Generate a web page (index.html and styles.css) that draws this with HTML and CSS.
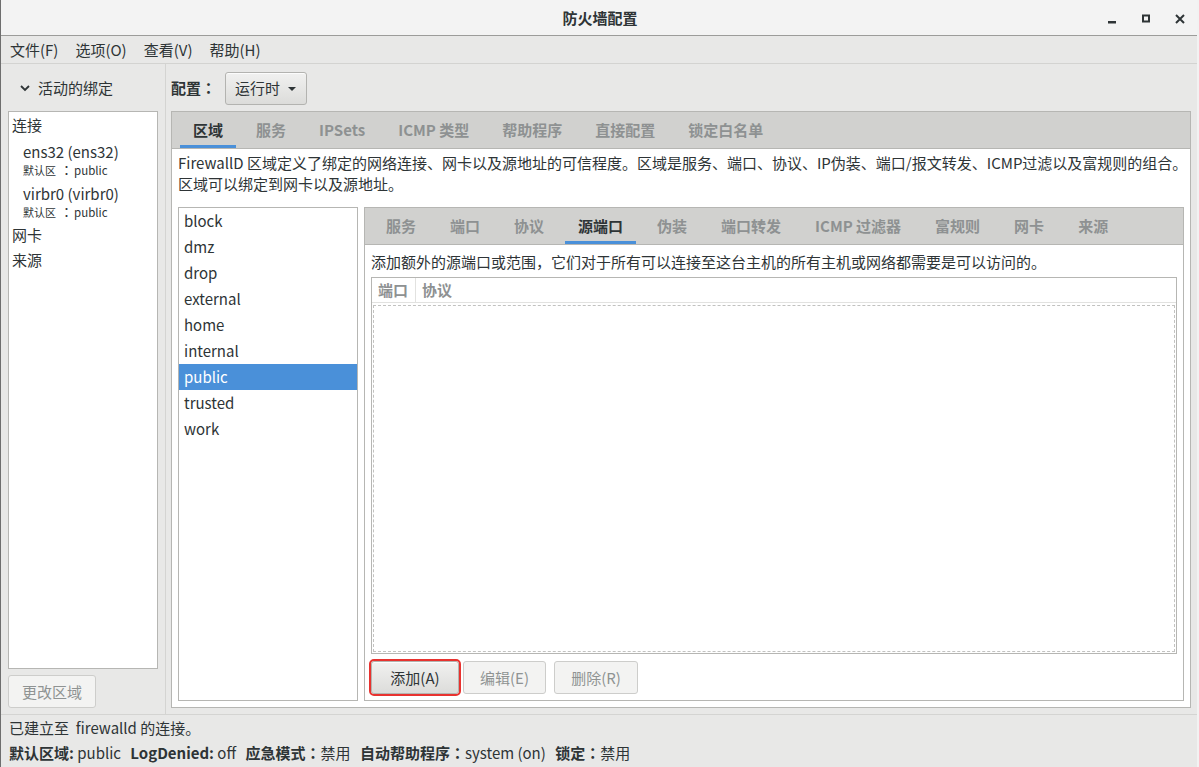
FILE: index.html
```html
<!DOCTYPE html>
<html lang="zh-CN">
<head>
<meta charset="utf-8">
<title>防火墙配置</title>
<link rel="stylesheet" href="styles.css">
</head>
<body>
<div class="window">
  <header class="titlebar">
    <div class="title">防火墙配置</div>
    <div class="controls">
      <svg class="ctl" viewBox="0 0 16 16" width="16" height="16"><rect x="4" y="10" width="8" height="2.5" fill="#2e3436"/></svg>
      <svg class="ctl" viewBox="0 0 16 16" width="16" height="16"><rect x="5" y="4.5" width="6" height="6" fill="none" stroke="#2e3436" stroke-width="2"/></svg>
      <svg class="ctl" viewBox="0 0 16 16" width="16" height="16"><path d="M4 4 L12 12 M12 4 L4 12" stroke="#2e3436" stroke-width="2" fill="none"/></svg>
    </div>
  </header>

  <nav class="menubar">
    <span>文件(F)</span>
    <span>选项(O)</span>
    <span>查看(V)</span>
    <span>帮助(H)</span>
  </nav>

  <div class="main">
    <aside class="left">
      <div class="expander">
        <svg class="chev" viewBox="0 0 10 10" width="10" height="10"><path d="M1 3 L5 7 L9 3" stroke="#2e3436" stroke-width="1.8" fill="none"/></svg>
        <span>活动的绑定</span>
      </div>
      <div class="bindings">
        <div class="cat">连接</div>
        <div class="bind">
          <div class="bname">ens32 (ens32)</div>
          <div class="bsub"><span class="sub-cjk">默认区</span><span class="colon sub-colon" lang="ja">：</span>public</div>
        </div>
        <div class="bind">
          <div class="bname">virbr0 (virbr0)</div>
          <div class="bsub"><span class="sub-cjk">默认区</span><span class="colon sub-colon" lang="ja">：</span>public</div>
        </div>
        <div class="cat cat-s">网卡</div>
        <div class="cat cat-s">来源</div>
      </div>
      <button class="btn btn-disabled change-zone">更改区域</button>
    </aside>

    <section class="right">
      <div class="config-row">
        <span class="cfg-label">配置<span class="colon" lang="ja">：</span></span>
        <button class="btn combo">运行时<svg class="caret" viewBox="0 0 8 4" width="8" height="4"><path d="M0 0 L8 0 L4 4 Z" fill="#2e3436"/></svg></button>
      </div>

      <div class="notebook outer">
        <div class="tabs">
          <span class="tab active">区域</span>
          <span class="tab">服务</span>
          <span class="tab">IPSets</span>
          <span class="tab">ICMP 类型</span>
          <span class="tab">帮助程序</span>
          <span class="tab">直接配置</span>
          <span class="tab">锁定白名单</span>
        </div>
        <div class="page outer-page">
          <p class="desc">FirewallD 区域定义了绑定的网络连接、网卡以及源地址的可信程度。区域是服务、端口、协议、IP伪装、端口/报文转发、ICMP过滤以及富规则的组合。<br>区域可以绑定到网卡以及源地址。</p>
          <div class="zone-row">
            <ul class="zones">
              <li>block</li>
              <li>dmz</li>
              <li>drop</li>
              <li>external</li>
              <li>home</li>
              <li>internal</li>
              <li class="selected">public</li>
              <li>trusted</li>
              <li>work</li>
            </ul>
            <div class="notebook inner">
              <div class="tabs">
                <span class="tab">服务</span>
                <span class="tab">端口</span>
                <span class="tab">协议</span>
                <span class="tab active">源端口</span>
                <span class="tab">伪装</span>
                <span class="tab">端口转发</span>
                <span class="tab">ICMP 过滤器</span>
                <span class="tab">富规则</span>
                <span class="tab">网卡</span>
                <span class="tab">来源</span>
              </div>
              <div class="page inner-page">
                <p class="desc">添加额外的源端口或范围，它们对于所有可以连接至这台主机的所有主机或网络都需要是可以访问的。</p>
                <div class="table">
                  <div class="thead">
                    <span class="th th-port">端口</span>
                    <span class="th">协议</span>
                  </div>
                  <div class="tbody"></div>
                </div>
                <div class="actions">
                  <button class="btn act act-add highlighted">添加(A)</button>
                  <button class="btn btn-disabled act act-edit">编辑(E)</button>
                  <button class="btn btn-disabled act act-del">删除(R)</button>
                </div>
              </div>
            </div>
          </div>
        </div>
      </div>
    </section>
  </div>

  <footer class="status">
    <div class="status-line">已建立至&nbsp; firewalld 的连接。</div>
    <div class="status-line info">
      <span class="item"><b>默认区域:</b> public</span>
      <span class="item"><b>LogDenied:</b> off</span>
      <span class="item"><b>应急模式<span class="colon" lang="ja">：</span></b>禁用</span>
      <span class="item"><b>自动帮助程序<span class="colon" lang="ja">：</span></b>system (on)</span>
      <span class="item"><b>锁定<span class="colon" lang="ja">：</span></b>禁用</span>
    </div>
  </footer>
</div>
</body>
</html>
```

FILE: styles.css
```css
* {
  box-sizing: border-box;
}

html, body {
  margin: 0;
  padding: 0;
}

body {
  background: #f2f2f2;
  font-family: "Noto Sans CJK SC", "Noto Sans", sans-serif;
  font-size: 15px;
  color: #2e3436;
}

/* full-width colon drawn centred, as in the reference font */
.colon {
  font-family: "Noto Sans CJK JP", "Noto Sans CJK SC", sans-serif;
}

.window {
  width: 1197px;
  height: 767px;
  border-left: 1px solid #6e6e6e;
  background: #e8e8e7;
  display: flex;
  flex-direction: column;
  overflow: hidden;
}

/* ---------- title bar ---------- */
.titlebar {
  height: 36px;
  flex: none;
  background: #f3f3f3;
  border-bottom: 1px solid #9c9c9a;
  display: grid;
  grid-template-columns: 1fr auto 1fr;
  align-items: center;
}

.title {
  grid-column: 2;
  font-weight: bold;
  font-size: 15px;
  line-height: 20px;
  padding-left: 2px;
}

.controls {
  grid-column: 3;
  justify-self: end;
  display: flex;
  align-items: center;
  gap: 18px;
  padding-right: 9px;
  margin-top: 2px;
}

.ctl {
  display: block;
}

/* ---------- menubar ---------- */
.menubar {
  height: 28px;
  flex: none;
  border-bottom: 1px solid #d3d3d1;
  display: flex;
  align-items: center;
  gap: 17px;
  padding-left: 9px;
  line-height: 20px;
}

/* ---------- main ---------- */
.main {
  height: 650px;
  flex: none;
  display: flex;
}

.left {
  width: 165px;
  flex: none;
  border-right: 1px solid #d4d4d2;
  padding: 0 7px 6px 7px;
  display: flex;
  flex-direction: column;
}

.expander {
  height: 47px;
  flex: none;
  display: flex;
  align-items: center;
  padding-left: 12px;
  line-height: 20px;
}

.chev {
  display: block;
  margin-right: 8px;
}

.bindings {
  flex: 1;
  background: #ffffff;
  border: 1px solid #b6b6b3;
  margin-bottom: 6px;
}

.cat {
  height: 26px;
  line-height: 26px;
  padding-left: 3px;
}

.cat-s {
  height: 25px;
  line-height: 25px;
}

.bind {
  padding: 4px 0 2px 14px;
}

.bname {
  line-height: 20px;
  height: 20px;
}

.bsub {
  font-size: 11.5px;
  line-height: 16px;
  height: 16px;
  white-space: nowrap;
}

.sub-cjk {
  font-size: 11px;
}

.sub-colon {
  font-size: 13px;
  margin-left: 4px;
  margin-right: 1px;
}

.btn {
  font-family: inherit;
  font-size: 15px;
  color: #2e3436;
  border: 1px solid #b3b3b0;
  border-radius: 3px;
  background: linear-gradient(to bottom, #f1f1f0, #dcdcda);
  padding: 0;
  height: 33px;
  line-height: 20px;
  box-shadow: inset 0 1px 0 rgba(255,255,255,0.8);
}

.btn-disabled {
  color: #8f9393;
  background: #f3f3f2;
  border-color: #cdcdcb;
  box-shadow: none;
}

.change-zone {
  width: 88px;
  flex: none;
}

/* ---------- right pane ---------- */
.right {
  flex: 1;
  padding: 0 6px 6px 5px;
  display: flex;
  flex-direction: column;
  min-width: 0;
}

.config-row {
  height: 47px;
  flex: none;
  display: flex;
  align-items: center;
  padding-top: 1px;
}

.cfg-label {
  font-weight: bold;
  margin-right: 9px;
  line-height: 20px;
}

.combo {
  width: 82px;
  display: flex;
  align-items: center;
  padding-left: 9px;
}

.caret {
  display: block;
  margin-left: 8px;
  margin-top: 1px;
}

/* ---------- notebooks ---------- */
.notebook {
  border: 1px solid #b6b6b3;
  display: flex;
  flex-direction: column;
  background: #ffffff;
}

.outer {
  flex: 1;
}

.tabs {
  height: 37px;
  flex: none;
  background: #d1d1cf;
  border-bottom: 1px solid #b6b6b3;
  display: flex;
  padding-left: 4.5px;
}

.tab {
  height: 36px;
  line-height: 36px;
  padding: 0 13px;
  margin: 0 3.5px;
  font-weight: bold;
  color: #8e9192;
  white-space: nowrap;
}

.inner .tabs {
  padding-left: 4px;
}

.inner .tab {
  margin: 0 4px;
}

.tab.active {
  color: #2e3436;
  box-shadow: inset 0 -3px 0 #4a90d9;
}

.page {
  flex: 1;
  display: flex;
  flex-direction: column;
  min-height: 0;
}

.outer-page {
  padding: 3px 6px 6px 6px;
}

.desc {
  margin: 0;
  line-height: 21px;
  white-space: nowrap;
}

.zone-row {
  flex: 1;
  display: flex;
  gap: 6px;
  margin-top: 13px;
  min-height: 0;
}

.zones {
  width: 180px;
  flex: none;
  margin: 0;
  padding: 0;
  list-style: none;
  border: 1px solid #b6b6b3;
  background: #ffffff;
}

.zones li {
  height: 26px;
  line-height: 26px;
  padding-left: 5px;
}

.zones li.selected {
  background: #4a90d9;
  color: #ffffff;
}

.inner {
  flex: 1;
  min-width: 0;
}

.inner-page {
  padding: 6px;
}

.table {
  flex: 1;
  margin-top: 5px;
  border: 1px solid #b6b6b3;
  display: flex;
  flex-direction: column;
}

.thead {
  height: 25px;
  flex: none;
  display: flex;
  border-bottom: 1px solid #e2e2e0;
}

.th {
  font-weight: bold;
  color: #8e9192;
  line-height: 24px;
  padding: 0 6px;
}

.th-port {
  width: 44px;
  border-right: 1px solid #e2e2e0;
}

.tbody {
  flex: 1;
  margin: 2px 1px 1px 1px;
  border: 1px dashed #c2c2c0;
}

.actions {
  flex: none;
  display: flex;
  margin-top: 7px;
}

.act-add {
  width: 88px;
  margin-right: 4px;
}

.act-edit {
  width: 83px;
  margin-right: 8px;
}

.act-del {
  width: 84px;
}

.highlighted {
  outline: 2px solid #e8322f;
  outline-offset: 0;
}

/* ---------- status ---------- */
.status {
  flex: 1;
  border-top: 1px solid #d4d4d2;
  padding: 1px 9px 0 8px;
}

.status-line {
  height: 24px;
  line-height: 24px;
  white-space: nowrap;
}

.status-line.info {
  height: 26px;
  line-height: 26px;
}

.item {
  margin-right: 6px;
}

.item b {
  font-weight: bold;
}
```
